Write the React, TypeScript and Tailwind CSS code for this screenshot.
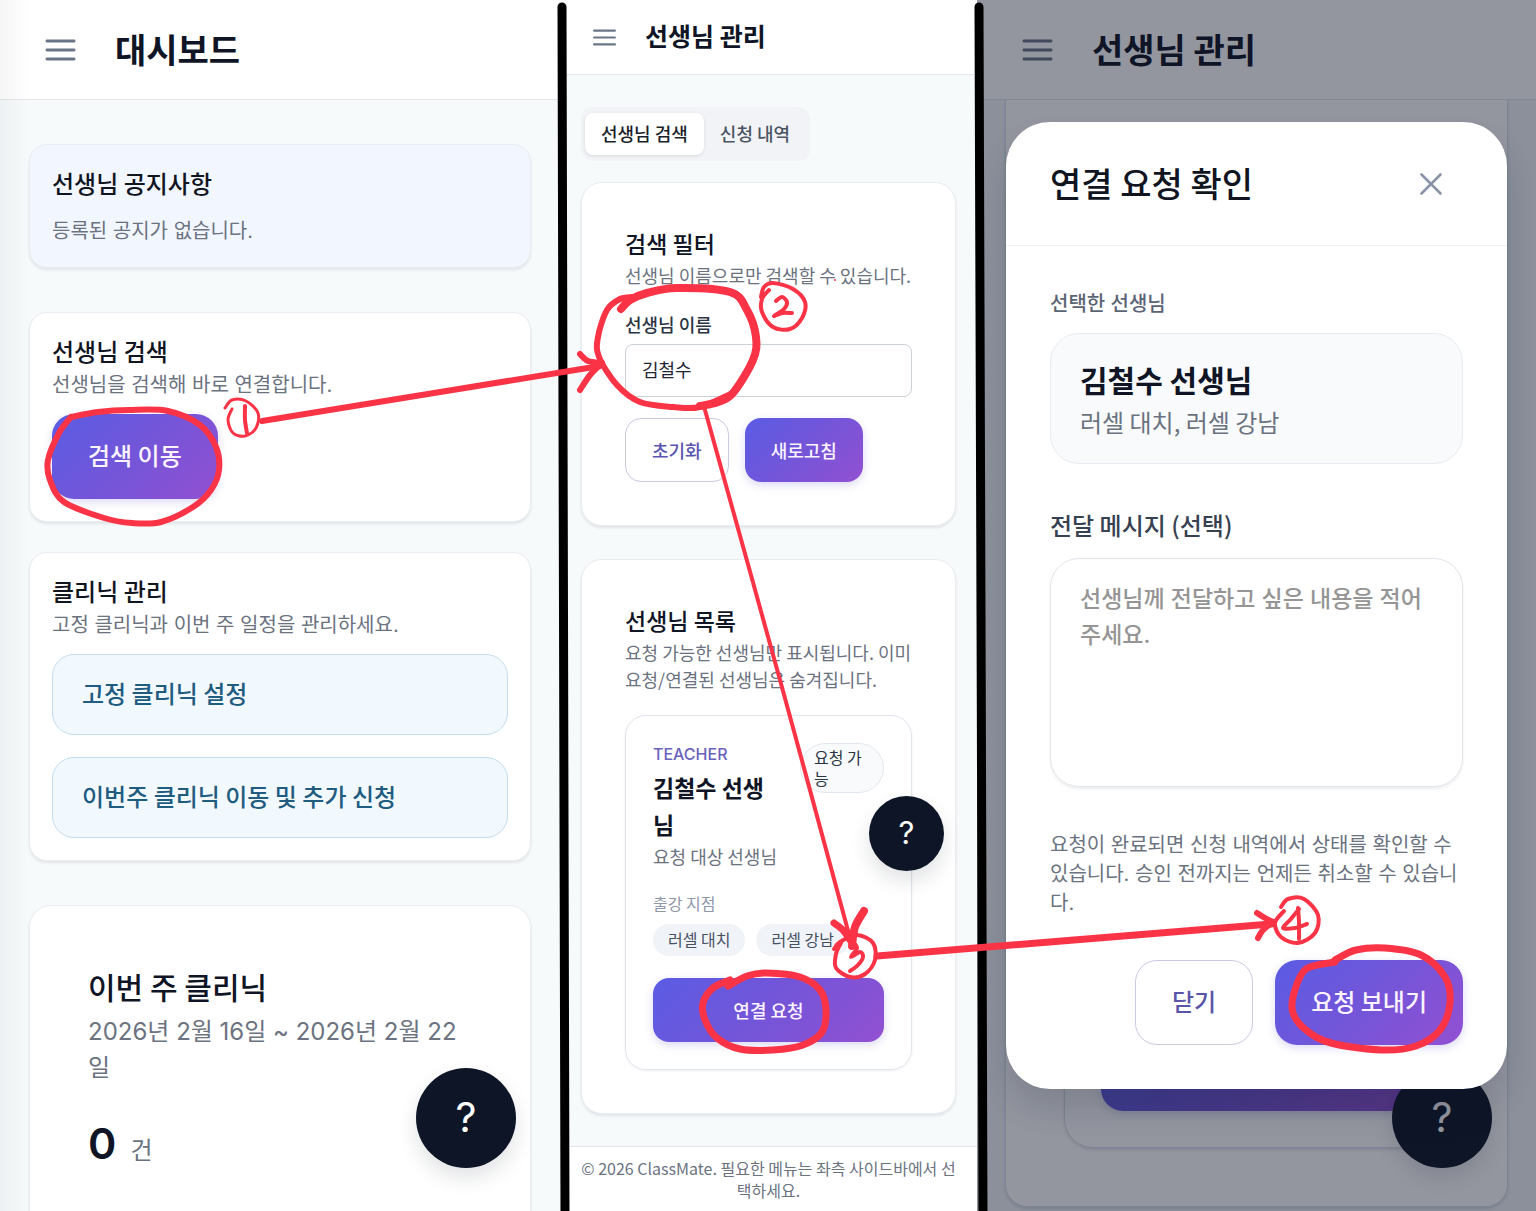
import type { ReactNode } from "react";
import { clsx } from "clsx";

type Point = [number, number];

interface Stroke {
  width: number;
  points: Point[];
}

const WIDE = "font-['Inter','Noto_Sans_CJK_KR',sans-serif]";

const GRADIENT =
  "bg-[linear-gradient(135deg,#5a5ce4_0%,#7455d8_50%,#9350d2_100%)] text-[#fbf3ff] shadow-[0_3px_8px_rgba(90,80,200,0.22)]";

const dividers: Point[][] = [
  [[562, 7], [565, 1220]],
  [[979, 7], [983, 1220]]
];

const strokes: Stroke[] = [
  // step 1
  { width: 6, points: [[71, 417], [98, 412], [129, 410], [168, 411], [200, 425], [216, 447], [219, 470], [211, 490], [193, 507], [161, 522], [132, 523], [104, 518], [64, 502], [50, 480], [48, 460], [59, 433], [71, 417]] },
  { width: 3, points: [[225, 408], [232, 400], [246, 401], [258, 413], [256, 428], [245, 436], [233, 433], [228, 420], [232, 409]] },
  { width: 4, points: [[245, 406], [245, 420], [247, 433]] },
  { width: 6, points: [[262, 421], [600, 366]] },
  { width: 6, points: [[580, 354], [588, 361], [602, 363]] },
  { width: 6, points: [[602, 363], [590, 375], [580, 390]] },
  // step 2
  { width: 8, points: [[621, 309], [630, 300], [647, 293], [677, 288], [730, 292], [747, 310], [756, 337], [753, 360], [733, 393], [718, 402], [700, 406]] },
  { width: 6, points: [[733, 393], [700, 407], [673, 407], [640, 402], [617, 385], [599, 357], [598, 337], [607, 310], [620, 299], [632, 297]] },
  { width: 4, points: [[761, 297], [764, 287], [773, 283], [793, 289], [805, 302], [802, 318], [790, 329], [773, 327], [762, 312], [762, 299], [769, 290]] },
  { width: 4, points: [[776, 301], [782, 297], [787, 302], [784, 309], [774, 316], [782, 313], [792, 313]] },
  { width: 4, points: [[705, 410], [780, 680], [850, 938]] },
  // step 3
  { width: 7, points: [[834, 923], [843, 930], [850, 940]] },
  { width: 8, points: [[852, 946], [855, 927], [864, 911]] },
  { width: 4, points: [[834, 949], [840, 942], [857, 935], [873, 943], [875, 960], [865, 974], [850, 977], [836, 968], [836, 954], [841, 943]] },
  { width: 4, points: [[853, 942], [857, 948], [851, 957], [860, 952], [863, 957], [858, 965], [850, 971]] },
  { width: 7, points: [[728, 986], [747, 976], [767, 973], [800, 977], [820, 990], [826, 1010], [822, 1032], [803, 1045], [773, 1050], [740, 1049], [717, 1038], [705, 1020], [703, 1003], [713, 988], [730, 980]] },
  { width: 7, points: [[877, 956], [1271, 924]] },
  // step 4
  { width: 6, points: [[1257, 913], [1265, 918], [1273, 922]] },
  { width: 6, points: [[1273, 922], [1263, 930], [1258, 938]] },
  { width: 4, points: [[1281, 907], [1288, 899], [1304, 899], [1318, 915], [1315, 933], [1298, 943], [1281, 937], [1275, 923], [1284, 911]] },
  { width: 4, points: [[1299, 909], [1290, 920], [1283, 928], [1295, 928], [1307, 924]] },
  { width: 4, points: [[1298, 908], [1299, 922], [1299, 939]] },
  { width: 7, points: [[1335, 960], [1356, 950], [1385, 948], [1421, 955], [1445, 977], [1450, 1003], [1440, 1030], [1416, 1046], [1381, 1050], [1331, 1043], [1306, 1030], [1293, 1013], [1294, 993], [1306, 969], [1335, 962]] }
];

// Catmull-Rom through the sampled pen points
function toPath(points: Point[]): string {
  let d = `M${points[0][0]} ${points[0][1]}`;
  for (let i = 0; i < points.length - 1; i++) {
    const p0 = points[i - 1] ?? points[i];
    const p1 = points[i];
    const p2 = points[i + 1];
    const p3 = points[i + 2] ?? p2;
    d += ` C${p1[0] + (p2[0] - p0[0]) / 6} ${p1[1] + (p2[1] - p0[1]) / 6}`;
    d += ` ${p2[0] - (p3[0] - p1[0]) / 6} ${p2[1] - (p3[1] - p1[1]) / 6} ${p2[0]} ${p2[1]}`;
  }
  return d;
}

function PenLayer() {
  return (
    <svg
      className="absolute inset-0 w-full h-full pointer-events-none"
      viewBox="0 0 1536 1211"
      preserveAspectRatio="none"
      fill="none"
      strokeLinecap="round"
      strokeLinejoin="round"
      aria-hidden="true"
    >
      {dividers.map((points, i) => (
        <path key={i} d={toPath(points)} stroke="#000" strokeWidth={9} />
      ))}
      {strokes.map((stroke, i) => (
        <path key={i} d={toPath(stroke.points)} stroke="#fa3446" strokeWidth={stroke.width} />
      ))}
      <circle cx="835" cy="280" r="1" fill="#fa3446" />
    </svg>
  );
}

function MenuIcon({ className }: { className: string }) {
  return (
    <svg className={className} viewBox="0 0 30 22" fill="none" stroke="currentColor" strokeWidth="2.8" strokeLinecap="round">
      <path d="M1.4 2h27.2M1.4 11h27.2M1.4 20h27.2" />
    </svg>
  );
}

function Header({ title, compact = false }: { title: string; compact?: boolean }) {
  return (
    <header
      className={clsx(
        "flex items-center shrink-0 bg-white border-b border-[#e2e8ec]",
        compact ? "h-[75px] px-[33px] gap-[29px]" : "h-[100px] px-[45px] gap-[39px]"
      )}
    >
      <button type="button" aria-label="메뉴" className="text-[#6b7588]">
        <MenuIcon className={compact ? "w-[23px] h-[17px]" : "w-[31px] h-[22px]"} />
      </button>
      <h1 className={clsx("pb-[2px] font-semibold text-[#101526]", compact ? "text-[25px]" : "text-[34px]")}>{title}</h1>
    </header>
  );
}

function HelpButton({ className }: { className: string }) {
  return (
    <button
      type="button"
      aria-label="도움말"
      className={clsx(
        "absolute rounded-full bg-[#0e1526] text-white font-['Inter',sans-serif] shadow-[0_10px_20px_rgba(15,23,42,0.12)]",
        className
      )}
    >
      ?
    </button>
  );
}

function Card({ className, children }: { className?: string; children: ReactNode }) {
  return (
    <section className={clsx("border border-[#e9edf2] shadow-[0_2px_3px_rgba(15,23,42,0.09)]", className)}>
      {children}
    </section>
  );
}

function DashboardPanel() {
  return (
    <div className="relative flex flex-col min-w-0 overflow-hidden bg-[#f7fafb]">
      <Header title="대시보드" />
      <main className="flex flex-col flex-1 gap-[44px] px-[29px] pt-[44px]">
        <Card className="rounded-[18px] p-[22px] bg-[#f2f6ff]">
          <h2 className="text-[24px] leading-[32px] font-medium text-[#11151f]">선생님 공지사항</h2>
          <p className={clsx("mt-[18px] text-[20px] leading-[28px] text-[#6b7280]", WIDE)}>등록된 공지가 없습니다.</p>
        </Card>

        <div className="flex flex-col gap-[30px]">
          <Card className="rounded-[18px] p-[22px] bg-white">
            <h2 className="mb-[4px] text-[24px] leading-[32px] font-medium text-[#11151f]">선생님 검색</h2>
            <p className={clsx("text-[20px] leading-[28px] text-[#6b7280]", WIDE)}>선생님을 검색해 바로 연결합니다.</p>
            <button
              type="button"
              className={clsx("mt-[15px] h-[85px] px-[36px] pb-[3px] rounded-[22px] text-[24px] font-medium block", GRADIENT)}
            >
              검색 이동
            </button>
          </Card>

          <Card className="rounded-[18px] p-[22px] bg-white">
            <h2 className="mb-[4px] text-[24px] leading-[32px] font-medium text-[#11151f]">클리닉 관리</h2>
            <p className={clsx("text-[20px] leading-[28px] text-[#6b7280]", WIDE)}>
              고정 클리닉과 이번 주 일정을 관리하세요.
            </p>
            <nav className="mt-[15px] flex flex-col gap-[22px]">
              {["고정 클리닉 설정", "이번주 클리닉 이동 및 추가 신청"].map((label) => (
                <a
                  key={label}
                  href="#"
                  className="flex items-center h-[81px] px-[29px] pb-[3px] rounded-[22px] border border-[#c3ddf0] bg-[#f1f8fe] text-[24px] font-medium text-[#1f5c80]"
                >
                  {label}
                </a>
              ))}
            </nav>
          </Card>
        </div>

        <Card className="flex-1 rounded-t-[22px] border-b-0 px-[58px] pt-[60px] bg-white">
          <h2 className="text-[30px] leading-[40px] font-medium text-[#101526]">이번 주 클리닉</h2>
          <p className={clsx("mt-[8px] text-[24px] leading-[36px] text-[#6b7280]", WIDE)}>
            2026년 2월 16일 ~ 2026년 2월 22일
          </p>
          <p className="mt-[27px] flex items-baseline gap-[14px]">
            <span className="font-['Inter',sans-serif] text-[43px] leading-[60px] font-semibold text-[#101526]">0</span>
            <span className="text-[24px] text-[#6b7280]">건</span>
          </p>
        </Card>
      </main>
      <div className="absolute inset-y-0 left-0 w-[30px] bg-linear-to-r from-slate-900/4 to-transparent pointer-events-none" />
      <HelpButton className="right-[44px] bottom-[43px] size-[100px] text-[41px]" />
    </div>
  );
}

function SearchPanel() {
  return (
    <div className="relative flex flex-col min-w-0 overflow-hidden bg-[#f7fafb]">
      <Header title="선생님 관리" compact />
      <main className="flex flex-col px-[21px] pt-[32px] pb-[32px]">
        <div role="tablist" className="self-start flex px-[4px] py-[6px] rounded-[12px] bg-[#f2f3f7] text-[18px] font-medium">
          <button
            type="button"
            role="tab"
            aria-selected="true"
            className="h-[42px] px-[16px] pb-[2px] rounded-[8px] bg-white text-[#1b1f29] shadow-[0_1px_3px_rgba(15,23,42,0.12)]"
          >
            선생님 검색
          </button>
          <button type="button" role="tab" aria-selected="false" className="h-[42px] px-[16px] pb-[2px] text-[#4b5563]">
            신청 내역
          </button>
        </div>

        <Card className="mt-[21px] rounded-[21px] p-[43px] bg-white">
          <h2 className="mb-[2px] text-[23px] leading-[34px] font-medium text-[#101526]">검색 필터</h2>
          <p className="text-[18px] leading-[27px] text-[#6b7280] whitespace-nowrap">
            선생님 이름으로만 검색할 수 있습니다.
          </p>
          <label htmlFor="teacher-name" className="block mt-[22px] text-[18px] leading-[27px] font-medium text-[#2b3443]">
            선생님 이름
          </label>
          <input
            id="teacher-name"
            type="text"
            defaultValue="김철수"
            className="mt-[6px] block w-full h-[53px] px-[16px] pb-[4px] rounded-[8px] border border-[#ccd1d8] bg-white text-[18px] text-[#1f2533]"
          />
          <div className="mt-[21px] flex gap-[16px] text-[18px] font-medium">
            <button type="button" className="h-[64px] px-[26px] rounded-[16px] border border-[#c9cbe3] text-[#5a55b0]">
              초기화
            </button>
            <button type="button" className={clsx("h-[64px] px-[26px] rounded-[16px]", GRADIENT)}>
              새로고침
            </button>
          </div>
        </Card>

        <Card className="mt-[33px] rounded-[21px] p-[43px] bg-white">
          <h2 className="mb-[2px] text-[23px] leading-[34px] font-medium text-[#101526]">선생님 목록</h2>
          <p className="text-[18px] leading-[27px] text-[#6b7280] whitespace-nowrap">
            요청 가능한 선생님만 표시됩니다. 이미
            <br />
            요청/연결된 선생님은 숨겨집니다.
          </p>

          <article className="mt-[22px] p-[27px] rounded-[21px] border border-[#e1e5ec] shadow-[0_1px_3px_rgba(15,23,42,0.08)]">
            <div className="flex items-start gap-[20px]">
              <div className="flex-1 min-w-0">
                <p className="font-['Inter',sans-serif] text-[16px] leading-[22px] font-medium text-[#6a63bd]">TEACHER</p>
                <h3 className="mt-[4px] text-[23px] leading-[37px] font-semibold text-[#101526]">김철수 선생님</h3>
                <p className="text-[18px] leading-[27px] text-[#6b7280] whitespace-nowrap">요청 대상 선생님</p>
              </div>
              <span className="w-[84px] px-[13px] py-[3px] rounded-full border border-[#e2e8f0] bg-[#f8fafc] text-[16px] leading-[21px] text-[#2b3443]">
                요청 가능
              </span>
            </div>
            <p className="mt-[22px] text-[16px] leading-[22px] text-[#8f97a8]">출강 지점</p>
            <ul className="mt-[10px] flex gap-[11px]">
              {["러셀 대치", "러셀 강남"].map((branch) => (
                <li key={branch} className="px-[15px] pb-[2px] rounded-full bg-[#f0f3f8] text-[16px] leading-[30px] text-[#475063]">
                  {branch}
                </li>
              ))}
            </ul>
            <button type="button" className={clsx("mt-[22px] w-full h-[64px] rounded-[16px] text-[18px] font-medium", GRADIENT)}>
              연결 요청
            </button>
          </article>
        </Card>
      </main>
      <footer className="flex-1 px-[20px] pt-[10px] border-t border-[#e2e8ec] bg-white text-center text-[16px] leading-[22px] text-[#6b7280]">
        © 2026 ClassMate. 필요한 메뉴는 좌측 사이드바에서 선택하세요.
      </footer>
      <HelpButton className="right-[33px] bottom-[340px] size-[75px] text-[31px]" />
    </div>
  );
}

function RequestDialog() {
  return (
    <div
      role="dialog"
      aria-labelledby="request-title"
      className="w-full rounded-[44px] bg-white shadow-[0_20px_32px_rgba(15,23,42,0.14)]"
    >
      <div className="flex items-center justify-between h-[124px] px-[44px] border-b border-[#eef1f4]">
        <h2 id="request-title" className="pb-[2px] text-[34px] font-medium text-[#11151f]">
          연결 요청 확인
        </h2>
        <button type="button" aria-label="창 닫기" className="p-[20px] text-[#8a94a6]">
          <svg className="size-[24px]" viewBox="0 0 24 24" fill="none" stroke="currentColor" strokeWidth="2.6" strokeLinecap="round">
            <path d="M2.5 2.5l19 19M21.5 2.5l-19 19" />
          </svg>
        </button>
      </div>

      <div className="px-[44px] pt-[44px] pb-[44px]">
        <p className={clsx("text-[20px] leading-[28px] font-medium text-[#5b6474]", WIDE)}>선택한 선생님</p>
        <div className="mt-[15px] px-[29px] pt-[26px] pb-[24px] rounded-[29px] border border-[#e8ecf2] bg-[#f8fafc]">
          <p className="text-[30px] leading-[38px] font-semibold text-[#101526]">김철수 선생님</p>
          <p className="mt-[6px] text-[24px] leading-[35px] text-[#6b7280]">러셀 대치, 러셀 강남</p>
        </div>

        <label htmlFor="request-message" className="block mt-[44px] text-[24px] leading-[34px] font-medium text-[#374151]">
          전달 메시지 (선택)
        </label>
        <textarea
          id="request-message"
          placeholder="선생님께 전달하고 싶은 내용을 적어주세요."
          className={clsx(
            "mt-[16px] block w-full h-[229px] px-[29px] pt-[22px] resize-none rounded-[29px] border border-[#e1e5ea] text-[23px] leading-[36px] font-medium placeholder:text-[#959595] shadow-[0_2px_3px_rgba(15,23,42,0.08)]",
            WIDE
          )}
        />

        <p className={clsx("mt-[44px] text-[20px] leading-[29px] text-[#6b7280]", WIDE)}>
          요청이 완료되면 신청 내역에서 상태를 확인할 수 있습니다. 승인 전까지는 언제든 취소할 수 있습니다.
        </p>
        <div className="mt-[42px] flex justify-end gap-[22px] text-[24px] font-medium">
          <button type="button" className="h-[85px] px-[36px] pb-[3px] rounded-[22px] border border-[#c9cbe3] text-[#5a55a8]">
            닫기
          </button>
          <button type="button" className={clsx("h-[85px] px-[36px] pb-[3px] rounded-[22px]", GRADIENT)}>
            요청 보내기
          </button>
        </div>
      </div>
    </div>
  );
}

function RequestPanel() {
  return (
    <div className="relative flex flex-col min-w-0 overflow-hidden bg-[#f0f4f8]">
      <Header title="선생님 관리" />
      <div className="flex flex-col flex-1 px-[28px] pb-[4px]">
        <div className="flex flex-col flex-1 px-[58px] pt-[100px] pb-[58px] rounded-b-[22px] border border-t-0 border-[#d9dee6] bg-white shadow-[0_2px_3px_rgba(15,23,42,0.12)]">
          <div className="flex flex-col flex-1 justify-end px-[36px] pb-[36px] rounded-[29px] border border-[#d9dee6] shadow-[0_2px_3px_rgba(15,23,42,0.12)]">
            <div className={clsx("h-[85px] rounded-[22px]", GRADIENT)} />
          </div>
        </div>
      </div>
      <HelpButton className="right-[44px] bottom-[43px] size-[100px] text-[41px]" />
      <div className="absolute inset-0 flex items-center px-[29px] bg-[#0f172a]/45">
        <RequestDialog />
      </div>
    </div>
  );
}

export default function App() {
  return (
    <div className="relative grid h-screen grid-cols-[560fr_417fr_559fr] grid-rows-1 overflow-hidden font-['Noto_Sans_CJK_KR','Inter',sans-serif]">
      <DashboardPanel />
      <SearchPanel />
      <RequestPanel />
      <PenLayer />
    </div>
  );
}
